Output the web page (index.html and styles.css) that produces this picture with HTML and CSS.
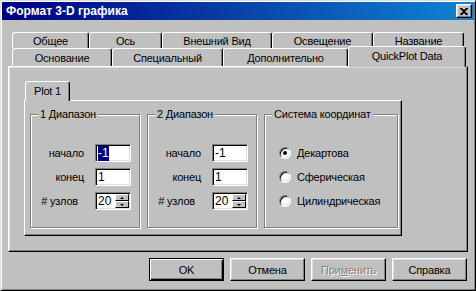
FILE: index.html
```html
<!DOCTYPE html>
<html lang="ru">
<head>
  <meta charset="UTF-8">
  <title>Формат 3-D графика</title>
  <link rel="stylesheet" href="styles.css">
</head>
<body>

  <div class="window">
    <div class="titlebar">
      <span class="title">Формат 3-D графика</span>
      <span class="close">
        <svg width="8" height="7" viewBox="0 0 8 7"><path d="M0 0h2l2 2 2-2h2v1l-3 2.5 3 2.5v1h-2l-2-2-2 2h-2v-1l3-2.5-3-2.5z" fill="#000"/></svg>
      </span>
    </div>

    <div class="content">
      <div class="tabrow back">
        <div class="tab">Общее</div>
        <div class="tab">Ось</div>
        <div class="tab">Внешний Вид</div>
        <div class="tab">Освещение</div>
        <div class="tab">Название</div>
      </div>
      <div class="tabrow front">
        <div class="tab">Основание</div>
        <div class="tab">Специальный</div>
        <div class="tab">Дополнительно</div>
        <div class="tab active">QuickPlot Data</div>
      </div>

      <div class="panel">
        <div class="subtabs">
          <div class="tab active">Plot 1</div>
        </div>
        <div class="page">

          <div class="group range">
            <div class="caption">1 Диапазон</div>
            <div class="fields">
              <label>начало</label>
              <div class="field"><span class="sel">-1</span></div>
              <label>конец</label>
              <div class="field">1</div>
              <label class="nodes"># узлов</label>
              <div class="field spin">
                <span class="val">20</span>
                <span class="spin-btns"><span class="spin-btn up"></span><span class="spin-btn down"></span></span>
              </div>
            </div>
          </div>

          <div class="group range">
            <div class="caption">2 Диапазон</div>
            <div class="fields">
              <label>начало</label>
              <div class="field">-1</div>
              <label>конец</label>
              <div class="field">1</div>
              <label class="nodes"># узлов</label>
              <div class="field spin">
                <span class="val">20</span>
                <span class="spin-btns"><span class="spin-btn up"></span><span class="spin-btn down"></span></span>
              </div>
            </div>
          </div>

          <div class="group coords">
            <div class="caption">Система координат</div>
            <div class="radios">
              <div class="radio-row"><span class="radio checked"></span>Декартова</div>
              <div class="radio-row"><span class="radio"></span>Сферическая</div>
              <div class="radio-row"><span class="radio"></span>Цилиндрическая</div>
            </div>
          </div>

        </div>
      </div>

      <div class="buttons">
        <div class="btn default">OK</div>
        <div class="btn">Отмена</div>
        <div class="btn disabled">При<u>м</u>енить</div>
        <div class="btn">Справка</div>
      </div>
    </div>
  </div>

</body>
</html>
```

FILE: styles.css
```css
body { margin: 0; background: #c0c0c0; font-family: 'Liberation Sans', Arial, sans-serif; font-size: 11px; letter-spacing: -0.2px; color: #000; }

.window { width: 476px; height: 291px; box-sizing: border-box; background: #c0c0c0; border: 1px solid; border-color: #dfdfdf #000 #000 #dfdfdf; box-shadow: inset 1px 1px #fff, inset -1px -1px #808080; padding: 1px; }

.titlebar { height: 18px; display: flex; align-items: center; justify-content: space-between; background: linear-gradient(to right, #000080, #1084d0); padding: 0 2px 0 4px; }
.title { color: #fff; font-weight: bold; font-size: 12px; letter-spacing: 0; }
.close { width: 16px; height: 14px; box-sizing: border-box; background: #c0c0c0; border: 1px solid; border-color: #fff #000 #000 #fff; box-shadow: inset -1px -1px #808080, inset 1px 1px #dfdfdf; display: flex; align-items: center; justify-content: center; }

.content { padding: 12px 6px 0 6px; }

/* tabs */
.tabrow { display: flex; margin: 0 4px; }
.tabrow.back { height: 16px; }
.tabrow.front { height: 18px; }
.tab { box-sizing: border-box; background: #c0c0c0; border: 1px solid; border-bottom: 0; border-color: #fff #000 transparent #fff; border-radius: 3px 3px 0 0; box-shadow: inset -1px 0 #808080; text-align: center; }
.back .tab { height: 16px; line-height: 16px; }
.front .tab { height: 18px; line-height: 19px; }
.back .tab:nth-child(1) { width: 77px; }
.back .tab:nth-child(2) { width: 73px; }
.back .tab:nth-child(3) { width: 110px; }
.back .tab:nth-child(4) { width: 101px; }
.back .tab:nth-child(5) { width: 91px; }
.front .tab:nth-child(1) { width: 100px; }
.front .tab:nth-child(2) { width: 111px; }
.front .tab:nth-child(3) { width: 125px; }
.front .tab.active { width: 118px; height: 21px; line-height: 19px; margin: -2px -2px -1px 0; position: relative; z-index: 1; }

.panel { height: 186px; box-sizing: border-box; border: 1px solid; border-color: #fff #000 #000 #fff; box-shadow: inset -1px -1px #808080, inset 1px 1px #dfdfdf; padding: 14px 0 0 15px; }

.subtabs { display: flex; height: 19px; }
.subtabs .tab.active { width: 45px; height: 20px; line-height: 18px; margin: 0 0 -1px 1px; position: relative; z-index: 1; }

.page { width: 378px; height: 136px; box-sizing: border-box; border: 1px solid; border-color: #fff #000 #000 #fff; box-shadow: inset -1px -1px #808080; padding: 13px 0 0 5px; display: flex; gap: 7px; }

/* group boxes */
.group { height: 114px; box-sizing: border-box; border: 1px solid #808080; box-shadow: inset 1px 1px #fff, 1px 1px #fff; }
.group.range { width: 110px; padding-right: 8px; }
.group.coords { width: 134px; }
.caption { display: table; margin: -8px 0 0 7px; padding: 0 2px; line-height: 14px; background: #c0c0c0; }

.fields { display: grid; grid-template-columns: 1fr 36px; grid-auto-rows: 18px; column-gap: 11px; row-gap: 6px; margin-top: 23px; align-items: center; }
.fields label { text-align: right; }
.fields label.nodes { margin-right: 6px; }

.field { height: 18px; box-sizing: border-box; background: #fff; border: 1px solid; border-color: #808080 #fff #fff #808080; box-shadow: inset 1px 1px #000, inset -1px -1px #dfdfdf; padding: 1px 0 0 2px; font-size: 12px; letter-spacing: 0; line-height: 15px; display: flex; align-items: center; }
.sel { background: #000080; color: #fff; }
.spin .val { flex: 1; }
.spin-btns { display: flex; flex-direction: column; width: 14px; height: 14px; margin: -1px 1px 0 0; }
.spin-btn { flex: 1; box-sizing: border-box; background: #c0c0c0; border: 1px solid; border-color: #fff #000 #000 #fff; display: flex; align-items: center; justify-content: center; }
.spin-btn::after { content: ''; border-left: 2px solid transparent; border-right: 2px solid transparent; }
.spin-btn.up::after { border-bottom: 2px solid #000; }
.spin-btn.down::after { border-top: 2px solid #000; }

.radios { display: flex; flex-direction: column; gap: 6px; margin-top: 23px; padding-left: 14px; }
.radio-row { height: 18px; display: flex; align-items: center; gap: 6px; }
.radio { width: 12px; height: 12px; box-sizing: border-box; border-radius: 50%; background: #fff; border: 1px solid; border-color: #808080 #fff #fff #808080; box-shadow: inset 1px 1px #000, inset -1px -1px #dfdfdf; display: flex; align-items: center; justify-content: center; }
.radio.checked::after { content: ''; width: 4px; height: 4px; border-radius: 50%; background: #000; }

/* dialog buttons */
.buttons { display: flex; justify-content: flex-end; gap: 6px; margin-top: 6px; padding-right: 1px; }
.btn { width: 75px; height: 23px; box-sizing: border-box; border: 1px solid; border-color: #fff #000 #000 #fff; box-shadow: inset -1px -1px #808080, inset 1px 1px #dfdfdf; display: flex; align-items: center; justify-content: center; }
.btn.default { border-color: #000; box-shadow: inset 1px 1px #fff, inset -1px -1px #000, inset -2px -2px #808080; }
.btn.disabled { color: #808080; text-shadow: 1px 1px #fff; }
```
